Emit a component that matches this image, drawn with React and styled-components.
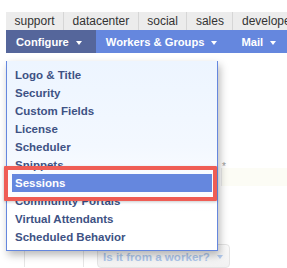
import styled, { createGlobalStyle } from "styled-components";

const GlobalStyle = createGlobalStyle`
  html, body {
    margin: 0;
    padding: 0;
    background: #ffffff;
  }
  body {
    font-family: "Liberation Sans", Helvetica, Arial, sans-serif;
  }
`;

const tabs = ["support", "datacenter", "social", "sales", "developers"];

const navItems = [
  { label: "Configure", active: true },
  { label: "Workers & Groups" },
  { label: "Mail" }
];

const menuItems = [
  "Logo & Title",
  "Security",
  "Custom Fields",
  "License",
  "Scheduler",
  "Snippets",
  "Sessions",
  "Community Portals",
  "Virtual Attendants",
  "Scheduled Behavior"
];

function App() {
  return (
    <Page>
      <GlobalStyle />
      <TabBar>
        {tabs.map((t) => (
          <Tab key={t}>{t}</Tab>
        ))}
      </TabBar>
      <NavBar>
        {navItems.map((n) => (
          <NavItem key={n.label} active={n.active}>
            {n.label}
            <Caret />
          </NavItem>
        ))}
      </NavBar>

      <Body>
        <FieldRow>
          <Star>*</Star>
          <Input />
        </FieldRow>
        <BottomRow>
          <Cell width={58} />
          <Cell width={13} />
          <GhostButton>
            Is it from a worker?
            <Caret light />
          </GhostButton>
        </BottomRow>
      </Body>

      <Dropdown>
        {menuItems.map((m) => (
          <MenuItem key={m} selected={m === "Sessions"}>
            {m}
          </MenuItem>
        ))}
      </Dropdown>
      <Highlight />
    </Page>
  );
}
export default App;

const Page = styled.div`
  position: relative;
  width: 287px;
  height: 268px;
  overflow: hidden;
  background: #ffffff;
  display: flex;
  flex-direction: column;
`;

const TabBar = styled.div`
  display: flex;
  margin: 12px 0 0 6px;
  height: 22px;
  background: #ececec;
  white-space: nowrap;
`;

const Tab = styled.div`
  display: flex;
  align-items: center;
  padding: 0 8.5px;
  font-size: 12px;
  color: #333333;
  border-right: 1px solid #d6d6d6;
  flex-shrink: 0;
`;

const NavBar = styled.div`
  display: flex;
  margin-left: 6px;
  height: 27px;
  background: #6587de;
  white-space: nowrap;
`;

const NavItem = styled.div`
  display: flex;
  align-items: center;
  padding: 0 14px 0 10px;
  font-size: 11.2px;
  font-weight: bold;
  color: #ffffff;
  background: ${(props) => (props.active ? "#55669b" : "transparent")};
  flex-shrink: 0;
`;

const Caret = styled.span`
  display: inline-block;
  margin-left: 7px;
  margin-top: 2px;
  width: 0;
  height: 0;
  border-left: 3px solid transparent;
  border-right: 3px solid transparent;
  border-top: 4px solid ${(props) => (props.light ? "#b3cbee" : "#ffffff")};
`;

const Body = styled.div`
  display: flex;
  flex-direction: column;
`;

const FieldRow = styled.div`
  display: flex;
  flex-direction: column;
  margin-top: 108px;
  padding-left: 221px;
`;

const Star = styled.div`
  height: 7px;
  margin-left: 1px;
  font-size: 10px;
  line-height: 12px;
  color: #9a9a9a;
`;

const Input = styled.div`
  height: 18px;
  background: #fcfcf5;
  border-left: 1px solid #ececec;
`;

const BottomRow = styled.div`
  display: flex;
  align-items: flex-start;
  margin-top: 58px;
  padding-left: 24px;
`;

const Cell = styled.div`
  width: ${(props) => props.width}px;
  height: 20px;
  margin-top: 3px;
  border-left: 1px solid #e6e6e6;
`;

const GhostButton = styled.div`
  display: flex;
  align-items: center;
  height: 22px;
  padding: 0 6px 0 5px;
  border: 1px solid #e4e4e4;
  border-radius: 4px;
  background: linear-gradient(#fbfbfb, #f1f1f1);
  font-size: 11.6px;
  font-weight: bold;
  color: #adc6ea;
  white-space: nowrap;
`;

const Dropdown = styled.div`
  position: absolute;
  left: 6px;
  top: 61px;
  width: 212px;
  box-sizing: border-box;
  padding: 5px 0 4px;
  border: 1px solid #6587de;
  border-top: none;
  background: linear-gradient(#edf5ff 0%, #f3f8ff 45%, #ffffff 80%);
  box-shadow: 2px 4px 8px rgba(0, 0, 0, 0.28);
`;

const MenuItem = styled.div`
  height: 18px;
  margin: 0 5px;
  padding: 0 3px;
  display: flex;
  align-items: center;
  font-size: 11.5px;
  font-weight: bold;
  color: ${(props) => (props.selected ? "#ffffff" : "#3e5284")};
  background: ${(props) => (props.selected ? "#6587de" : "transparent")};
`;

const Highlight = styled.div`
  position: absolute;
  left: 4px;
  top: 166px;
  width: 213px;
  height: 35px;
  box-sizing: border-box;
  border: 4px solid #ef5d55;
  border-radius: 1px;
  box-shadow: 0 1px 3px rgba(0, 0, 0, 0.2);
`;
